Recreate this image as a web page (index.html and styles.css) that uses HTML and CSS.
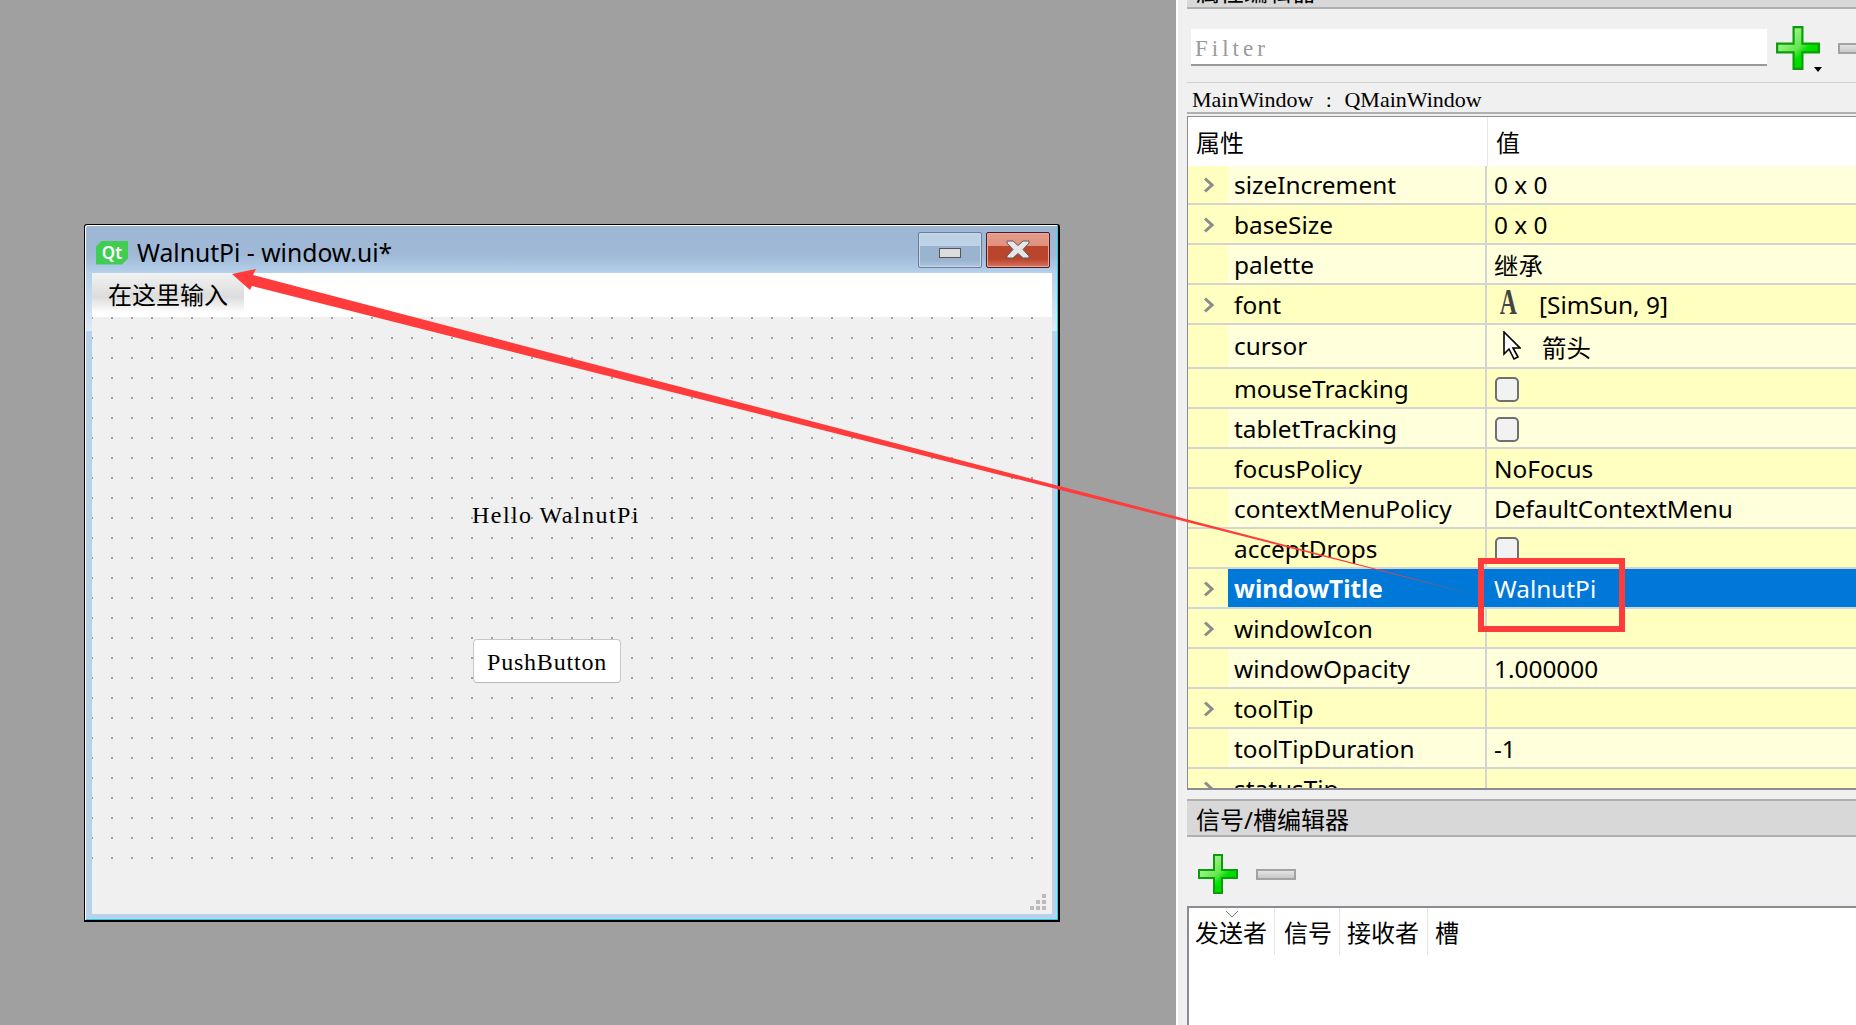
FILE: index.html
```html
<!DOCTYPE html>
<html>
    <head>
        <meta charset="utf-8">
        <title>WalnutPi - window.ui*</title>
        <link rel="stylesheet" href="styles.css">
    </head>
    <body>
        <svg class="defs" width="0" height="0">
            <defs>
                <linearGradient id="plus_fill" x1="0" y1="0" x2="1" y2="1">
                    <stop offset="0" stop-color="#d8f5c0"/>
                    <stop offset="0.5" stop-color="#5fe84a"/>
                    <stop offset="0.62" stop-color="#00e000"/>
                    <stop offset="1" stop-color="#00c800"/>
                </linearGradient>
                <linearGradient id="minus_fill" x1="0" y1="0" x2="0" y2="1">
                    <stop offset="0" stop-color="#e8e8e8"/>
                    <stop offset="1" stop-color="#c4c4c4"/>
                </linearGradient>
                <symbol id="plus" viewBox="0 0 40 40">
                    <path d="M16 1h8v15h15v8H24v15h-8V24H1v-8h15z" fill="url(#plus_fill)" stroke="#0b9d0b" stroke-width="2"/>
                </symbol>
                <symbol id="minus" viewBox="0 0 40 11">
                    <rect x="1" y="1" width="38" height="9" fill="url(#minus_fill)" stroke="#a3a3a3" stroke-width="2"/>
                </symbol>
                <symbol id="chevron" viewBox="0 0 11 16">
                    <path d="M2 1.5L9 8L2 14.5" fill="none" stroke="#8c8c8c" stroke-width="3"/>
                </symbol>
            </defs>
        </svg>

        <div class="desktop">
            <div class="window">
                <div class="titlebar">
                    <div class="qt_logo">Qt</div>
                    <div class="window_title">WalnutPi - window.ui*</div>
                    <div class="win_btn win_min"><span class="min_glyph"></span></div>
                    <div class="win_btn win_close">
                        <svg width="24" height="19" viewBox="0 0 24 19">
                            <path d="M1 1h6l5 4.5L17 1h6v2l-6 6.5 6 6.5v2h-6l-5-4.5L7 18H1v-2l6-6.5L1 3z" fill="#e6e6e6" stroke="#5a5a66" stroke-width="1"/>
                        </svg>
                    </div>
                </div>
                <div class="menubar">
                    <div class="menu_item">在这里输入</div>
                </div>
                <div class="form">
                    <svg class="dots" width="942" height="542">
                        <defs>
                            <pattern id="dot" x="-1" y="0" width="20" height="20" patternUnits="userSpaceOnUse">
                                <rect width="2" height="2" fill="#a0a0a0"/>
                            </pattern>
                        </defs>
                        <rect width="942" height="542" fill="url(#dot)"/>
                    </svg>
                    <div class="form_label">Hello WalnutPi</div>
                    <div class="form_button">PushButton</div>
                    <svg class="grip" width="16" height="16" viewBox="0 0 16 16">
                        <path d="M12 0h4v4h-4zM6 6h4v4H6zM12 6h4v4h-4zM0 12h4v4H0zM6 12h4v4H6zM12 12h4v4h-4z" fill="#bbb"/>
                    </svg>
                </div>
            </div>
        </div>

        <div class="panel">
            <div class="dock_title dock_top"><span class="dock_top_text">属性编辑器</span></div>

            <div class="filter_row">
                <input class="filter" type="text" placeholder="Filter">
                <div class="plus_wrap">
                    <svg class="plus_big"><use href="#plus"/></svg>
                    <span class="drop"></span>
                </div>
                <svg class="minus_top"><use href="#minus"/></svg>
            </div>

            <div class="class_bar">MainWindow : QMainWindow</div>

            <div class="props">
                <div class="props_head">
                    <div class="head_name">属性</div>
                    <div class="head_value">值</div>
                </div>
                <div class="row row_first light">
                    <div class="branch"><svg class="chev"><use href="#chevron"/></svg></div>
                    <div class="name">sizeIncrement</div>
                    <div class="value">0 x 0</div>
                </div>
                <div class="row">
                    <div class="branch"><svg class="chev"><use href="#chevron"/></svg></div>
                    <div class="name">baseSize</div>
                    <div class="value">0 x 0</div>
                </div>
                <div class="row light">
                    <div class="branch"></div>
                    <div class="name">palette</div>
                    <div class="value">继承</div>
                </div>
                <div class="row">
                    <div class="branch"><svg class="chev"><use href="#chevron"/></svg></div>
                    <div class="name">font</div>
                    <div class="value"><span class="font_a">A</span>[SimSun, 9]</div>
                </div>
                <div class="row row_tall light">
                    <div class="branch"></div>
                    <div class="name">cursor</div>
                    <div class="value">
                        <svg class="arrow_cursor" width="18" height="30" viewBox="0 0 18 30">
                            <path d="M1 1v22l5-5 5 10 4-2-5-9h7z" fill="#fff" stroke="#000" stroke-width="1.6"/>
                        </svg>
                        箭头
                    </div>
                </div>
                <div class="row">
                    <div class="branch"></div>
                    <div class="name">mouseTracking</div>
                    <div class="value"><span class="check"></span></div>
                </div>
                <div class="row light">
                    <div class="branch"></div>
                    <div class="name">tabletTracking</div>
                    <div class="value"><span class="check"></span></div>
                </div>
                <div class="row">
                    <div class="branch"></div>
                    <div class="name">focusPolicy</div>
                    <div class="value">NoFocus</div>
                </div>
                <div class="row light">
                    <div class="branch"></div>
                    <div class="name">contextMenuPolicy</div>
                    <div class="value">DefaultContextMenu</div>
                </div>
                <div class="row">
                    <div class="branch"></div>
                    <div class="name">acceptDrops</div>
                    <div class="value"><span class="check"></span></div>
                </div>
                <div class="row selected">
                    <div class="branch"><svg class="chev"><use href="#chevron"/></svg></div>
                    <div class="name">windowTitle</div>
                    <div class="value">WalnutPi</div>
                </div>
                <div class="row">
                    <div class="branch"><svg class="chev"><use href="#chevron"/></svg></div>
                    <div class="name">windowIcon</div>
                    <div class="value"></div>
                </div>
                <div class="row light">
                    <div class="branch"></div>
                    <div class="name">windowOpacity</div>
                    <div class="value">1.000000</div>
                </div>
                <div class="row">
                    <div class="branch"><svg class="chev"><use href="#chevron"/></svg></div>
                    <div class="name">toolTip</div>
                    <div class="value"></div>
                </div>
                <div class="row light">
                    <div class="branch"></div>
                    <div class="name">toolTipDuration</div>
                    <div class="value">-1</div>
                </div>
                <div class="row">
                    <div class="branch"><svg class="chev"><use href="#chevron"/></svg></div>
                    <div class="name">statusTip</div>
                    <div class="value"></div>
                </div>
            </div>

            <div class="dock_title dock_signal">信号/槽编辑器</div>

            <div class="tool_row">
                <svg class="plus_small"><use href="#plus"/></svg>
                <svg class="minus_small"><use href="#minus"/></svg>
            </div>

            <div class="signals">
                <div class="signals_head">
                    <div class="sig_col sig_sender">发送者<svg class="sort" width="14" height="7" viewBox="0 0 14 7"><path d="M1 0l6 6 6-6" fill="none" stroke="#777"/></svg></div>
                    <div class="sig_col sig_signal">信号</div>
                    <div class="sig_col sig_receiver">接收者</div>
                    <div class="sig_col sig_slot">槽</div>
                </div>
            </div>
        </div>

        <!-- red marks drawn over the screenshot -->
        <svg class="marks" width="1856" height="1025" viewBox="0 0 1856 1025">
            <path d="M232 274L256 269L253 275L1476 595L252 286L250 290z" fill="#ff3b3b"/>
            <rect x="1481" y="561" width="141" height="68" fill="none" stroke="#ff3b3b" stroke-width="6"/>
        </svg>
    </body>
</html>
```

FILE: styles.css
```css
* {
    margin: 0;
    padding: 0;
    box-sizing: border-box;
    outline: none;
}
body {
    display: flex;
    width: 1856px;
    height: 1025px;
    overflow: hidden;
    background: #a0a0a0;
    color: #000;
    font-family: "Noto Sans", "Noto Sans CJK SC", sans-serif;
    font-size: 24.4px;
}
.defs {
    position: absolute;
}
.marks {
    position: absolute;
    left: 0;
    top: 0;
    pointer-events: none;
}

/* designer canvas */
.desktop {
    width: 1176px;
    flex: none;
    padding: 224px 0 0 84px;
}
.window {
    width: 976px;
    height: 698px;
    padding: 0 6px 6px 7px;
    border-style: solid;
    border-color: #000;
    border-width: 1px 2px 2px 1px;
    border-radius: 3px 3px 0 0;
    box-shadow: inset 1px 1px 0 #fff, inset -1px -1px 0 #1fd0e8;
    background: linear-gradient(#9cb6d4 0, #9fb9d7 30px, #b6d1eb 48px, #dde9f6 105px, #dde9f6 106px, #b8d2ec 106px);
}
.titlebar {
    display: flex;
    align-items: center;
    height: 48px;
    padding: 0 2px 0 4px;
}
.qt_logo {
    width: 32px;
    height: 24px;
    margin-top: 7px;
    background: #41cd52;
    color: #fff;
    font-size: 17px;
    font-weight: 600;
    line-height: 24px;
    text-align: center;
    clip-path: polygon(6px 0, 100% 0, 100% calc(100% - 6px), calc(100% - 6px) 100%, 0 100%, 0 6px);
}
.window_title {
    flex: 1;
    margin: 7px 0 0 9px;
    font-size: 24.7px;
}
.win_btn {
    display: flex;
    align-items: center;
    justify-content: center;
    width: 64px;
    height: 36px;
    margin-top: 1px;
    border-radius: 2px;
}
.win_min {
    margin-right: 4px;
    border: 1px solid #6d7d99;
    background: linear-gradient(#bdd1e7 0, #bdd1e7 13px, #9ab4d0 13px, #9ab4d0 27px, #b0c8e0 100%);
    box-shadow: inset 0 0 0 1px #c8d8ea;
}
.win_close {
    border: 1px solid #4f1a28;
    background: linear-gradient(#e59d89 0, #df907a 13px, #b8452c 13px, #b8452c 26px, #d9735c 100%);
    box-shadow: inset 0 0 0 1px #e8a898;
}
.min_glyph {
    width: 22px;
    height: 10px;
    margin-top: 7px;
    border: 1px solid #555;
    background: #ddd;
}
.menubar {
    height: 44px;
    background: #fff;
}
.menu_item {
    width: 152px;
    height: 40px;
    padding-left: 16px;
    background: linear-gradient(#f2f2f2, #dcdcdc 60%, #fff);
    font-size: 24px;
    line-height: 43px;
}
.form {
    position: relative;
    height: 597px;
    background: #f0f0f0;
}
.dots {
    display: block;
}
.form_label {
    position: absolute;
    left: 380px;
    top: 185px;
    font-family: "Liberation Serif", serif;
    font-size: 24px;
    letter-spacing: 1.45px;
    white-space: pre;
}
.form_button {
    position: absolute;
    left: 381px;
    top: 322px;
    width: 148px;
    height: 44px;
    border: 1px solid #c8c8c8;
    border-bottom-color: #b8b8b8;
    border-radius: 4px;
    background: #fff;
    font-family: "Liberation Serif", serif;
    font-size: 24px;
    letter-spacing: 0.8px;
    line-height: 44px;
    text-align: center;
}
.grip {
    position: absolute;
    right: 6px;
    bottom: 4px;
}

/* right side docks */
.panel {
    width: 680px;
    flex: none;
    height: 1025px;
    overflow: hidden;
    padding-left: 9px;
    border-left: 2px solid #fff;
    background: #f0f0f0;
}
.dock_title {
    background: #d8d8d8;
    font-size: 24px;
}
.dock_top {
    width: 700px;
    height: 9px;
    border-bottom: 2px solid #b0b0b0;
    padding-left: 9px;
    overflow: hidden;
}
.dock_top_text {
    display: block;
    margin-top: -26px;
    line-height: 36px;
}
.filter_row {
    display: flex;
    width: 700px;
    height: 44px;
    margin-top: 17px;
    padding-left: 4px;
}
.filter {
    width: 576px;
    height: 37px;
    margin-top: 3px;
    padding: 4px 4px 0 4px;
    border: 0;
    border-bottom: 2px solid #999;
    background: #fff;
    font-family: "Liberation Serif", serif;
    font-size: 23px;
    letter-spacing: 4px;
}
.filter::placeholder {
    color: #9a9a9a;
}
.plus_wrap {
    position: relative;
    width: 44px;
    height: 44px;
    margin-left: 9px;
}
.plus_big {
    width: 44px;
    height: 44px;
}
.drop {
    position: absolute;
    right: -2px;
    bottom: -2px;
    border-style: solid;
    border-width: 5px 4px 0 4px;
    border-color: #000 transparent transparent transparent;
}
.minus_top {
    width: 40px;
    height: 11px;
    margin: 17px 0 0 18px;
}
.class_bar {
    width: 700px;
    height: 32px;
    margin-top: 12px;
    padding-left: 5px;
    border-top: 1px solid #d0d0d0;
    border-bottom: 2px solid #b0b0b0;
    font-family: "Liberation Serif", serif;
    font-size: 22px;
    word-spacing: 7px;
    line-height: 33px;
    white-space: pre;
}

/* property table */
.props {
    width: 700px;
    height: 674px;
    margin-top: 2px;
    overflow: hidden;
    border-top: 1px solid #8b8b93;
    border-left: 1px solid #8b8b93;
    border-bottom: 2px solid #8b8b93;
    background: #fff;
}
.props_head {
    display: flex;
    height: 49px;
    font-size: 24px;
    line-height: 52px;
}
.head_name {
    width: 300px;
    padding-left: 8px;
    border-right: 1px solid #e8e8e8;
}
.head_value {
    padding-left: 8px;
}
.row {
    display: flex;
    align-items: center;
    height: 40px;
    border-bottom: 2px solid #d4d4d4;
    background: #ffffbf;
}
.row_first {
    height: 39px;
}
.row_tall {
    height: 44px;
}
.branch {
    display: flex;
    align-items: center;
    width: 40px;
    height: 100%;
    padding: 1px 0 0 15px;
    background: #ffffbf;
}
.chev {
    width: 11px;
    height: 16px;
}
.name {
    width: 259px;
    height: 100%;
    padding-left: 6px;
    border-right: 2px solid #d4d4d4;
    line-height: 40px;
}
.value {
    display: flex;
    align-items: center;
    flex: 1;
    height: 100%;
    padding-left: 7px;
}
.row_first .name {
    line-height: 38px;
}
.row_tall .name {
    line-height: 42px;
}
.light .name,
.light .value {
    background: #ffffdc;
}
.selected {
    border-bottom-color: #c8d8e8;
}
.selected .name {
    border-right-color: #0078d7;
    background: #0078d7;
    color: #fff;
    font-weight: 700;
}
.selected .value {
    background: #0078d7;
    color: #fff;
}
.font_a {
    width: 45px;
    padding-left: 5px;
    color: #444;
    font-family: "Liberation Serif", serif;
    font-size: 28px;
    font-weight: 700;
    transform: scale(0.85, 1.25);
    transform-origin: 10px 60%;
}
.arrow_cursor {
    margin: 0 21px 0 9px;
}
.check {
    width: 24px;
    height: 25px;
    margin: 2px 0 0 1px;
    border: 2px solid #6f6f6f;
    border-radius: 5px;
    background: #f2f2f2;
}

/* signal and slot editor */
.dock_signal {
    width: 700px;
    height: 38px;
    margin-top: 9px;
    padding-left: 9px;
    border-top: 2px solid #b0b0b0;
    border-bottom: 2px solid #b0b0b0;
    line-height: 38px;
}
.tool_row {
    display: flex;
    align-items: center;
    height: 69px;
    padding: 5px 0 0 11px;
}
.plus_small {
    width: 40px;
    height: 40px;
}
.minus_small {
    width: 40px;
    height: 11px;
    margin-left: 18px;
}
.signals {
    width: 700px;
    height: 119px;
    border-top: 2px solid #8b8b93;
    border-left: 2px solid #8b8b93;
    background: #fff;
}
.signals_head {
    display: flex;
    height: 47px;
    font-size: 24px;
    line-height: 50px;
}
.sig_col {
    position: relative;
    padding-left: 6px;
    border-right: 1px solid #e6e6e6;
    white-space: nowrap;
}
.sig_sender {
    width: 86px;
}
.sig_signal {
    width: 65px;
    padding-left: 9px;
}
.sig_receiver {
    width: 88px;
    padding-left: 7px;
}
.sig_slot {
    width: 60px;
    padding-left: 7px;
    border-right: 0;
}
.sort {
    position: absolute;
    left: 36px;
    top: 3px;
}
```
